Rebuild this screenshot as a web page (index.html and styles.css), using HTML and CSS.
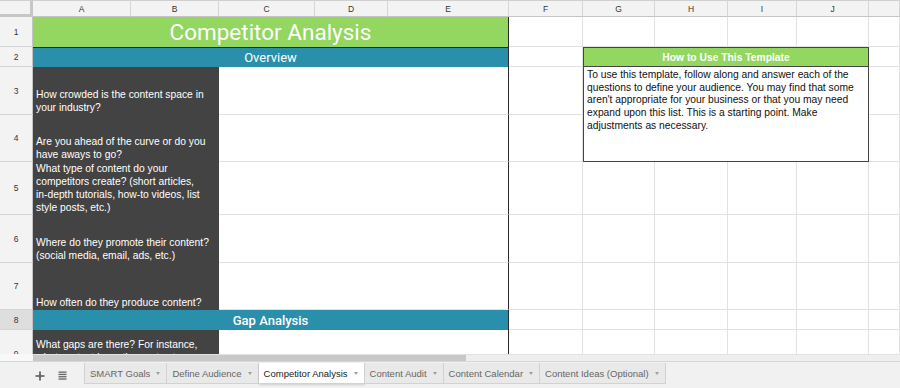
FILE: index.html
```html
<!DOCTYPE html>
<html>
<head>
<meta charset="utf-8">
<link rel="stylesheet" href="styles.css">
</head>
<body>
<div class="sheet">
  <div class="grid">
    <div class="corner"></div>
    <div class="ch">A</div><div class="ch">B</div><div class="ch">C</div><div class="ch">D</div><div class="ch">E</div>
    <div class="ch">F</div><div class="ch">G</div><div class="ch">H</div><div class="ch">I</div><div class="ch">J</div><div class="ch"></div>

    <div class="rh">1</div>
    <div class="title">Competitor Analysis</div>
    <div class="c"></div><div class="c"></div><div class="c"></div><div class="c"></div><div class="c"></div><div class="c"></div>

    <div class="rh">2</div>
    <div class="section">Overview</div>
    <div class="c"></div>
    <div class="howto-head">How to Use This Template</div>
    <div class="c"></div>

    <div class="rh">3</div>
    <div class="q">How crowded is the content space in your industry?</div>
    <div class="ans"></div>
    <div class="c"></div>
    <div class="howto-body">To use this template, follow along and answer each of the questions to define your audience. You may find that some aren't appropriate for your business or that you may need expand upon this list. This is a starting point. Make adjustments as necessary.</div>
    <div class="c"></div>

    <div class="rh">4</div>
    <div class="q">Are you ahead of the curve or do you have aways to go?</div>
    <div class="ans"></div>
    <div class="c"></div><div class="c"></div>

    <div class="rh">5</div>
    <div class="q nowrap"><p class="lines">What type of content do your<br>competitors create? (short articles,<br>in-depth tutorials, how-to videos, list<br>style posts, etc.)</p></div>
    <div class="ans"></div>
    <div class="c"></div><div class="c"></div><div class="c"></div><div class="c"></div><div class="c"></div><div class="c"></div>

    <div class="rh">6</div>
    <div class="q">Where do they promote their content? (social media, email, ads, etc.)</div>
    <div class="ans"></div>
    <div class="c"></div><div class="c"></div><div class="c"></div><div class="c"></div><div class="c"></div><div class="c"></div>

    <div class="rh">7</div>
    <div class="q">How often do they produce content?</div>
    <div class="ans"></div>
    <div class="c"></div><div class="c"></div><div class="c"></div><div class="c"></div><div class="c"></div><div class="c"></div>

    <div class="rh sel">8</div>
    <div class="section gap">Gap Analysis</div>
    <div class="c"></div><div class="c"></div><div class="c"></div><div class="c"></div><div class="c"></div><div class="c"></div>

    <div class="rh">9</div>
    <div class="q">What gaps are there? For instance, what content have they not yet covered?</div>
    <div class="ans"></div>
    <div class="c"></div><div class="c"></div><div class="c"></div><div class="c"></div><div class="c"></div><div class="c"></div>
  </div>
</div>

<div class="hscroll">
  <div class="hs-gap"></div>
  <div class="hs-track"><div class="hs-thumb"></div></div>
</div>

<div class="tabbar">
  <div class="tabtools">
    <svg class="ico" width="10" height="10" viewBox="0 0 10 10"><path d="M5 0.5V9.5M0.5 5H9.5" stroke="#555" stroke-width="1.6" fill="none"/></svg>
    <svg class="ico" width="9" height="9" viewBox="0 0 9 9"><rect x="0.5" y="0.5" width="8" height="1.3" fill="#666"/><rect x="0.5" y="2.8" width="8" height="1.3" fill="#666"/><rect x="0.5" y="5.1" width="8" height="1.3" fill="#666"/><rect x="0.5" y="7.4" width="8" height="1.3" fill="#666"/></svg>
  </div>
  <div class="tab">SMART Goals<span class="arr"></span></div>
  <div class="tab">Define Audience<span class="arr"></span></div>
  <div class="tab active">Competitor Analysis<span class="arr"></span></div>
  <div class="tab">Content Audit<span class="arr"></span></div>
  <div class="tab">Content Calendar<span class="arr"></span></div>
  <div class="tab">Content Ideas (Optional)<span class="arr"></span></div>
</div>
</body>
</html>
```

FILE: styles.css
```css
* { box-sizing: border-box; }

body {
  margin: 0;
  width: 900px;
  height: 388px;
  overflow: hidden;
  background: #fff;
  font-family: "Liberation Sans", Arial, sans-serif;
  display: flex;
  flex-direction: column;
}

.sheet {
  height: 354px;
  flex: none;
  overflow: hidden;
}

.grid {
  display: grid;
  grid-template-columns: 33px 98px 88px 96px 73px 121px 74px 72px 73px 69px 72px 31px;
  grid-template-rows: 17px 30px 20px 48px 47px 53px 48px 47px 20px 48px;
}

.corner {
  background: #f3f3f3;
  border-top: 1px solid #d0d0d0;
  border-right: 3px solid #c6c6c6;
  border-bottom: 3px solid #c6c6c6;
}

.ch {
  background: #f3f3f3;
  border-top: 1px solid #d0d0d0;
  border-right: 1px solid #d6d6d6;
  border-bottom: 1px solid #c4c4c4;
  color: #333;
  font-size: 8.5px;
  display: flex;
  align-items: center;
  justify-content: center;
}

.rh {
  background: #f3f3f3;
  border-right: 1px solid #c4c4c4;
  border-bottom: 1px solid #d6d6d6;
  color: #333;
  font-size: 8.5px;
  display: flex;
  align-items: center;
  justify-content: center;
}

.rh.sel {
  background: #dedede;
}

.c {
  border-right: 1px solid #e2e2e2;
  border-bottom: 1px solid #e2e2e2;
}

.title {
  grid-column: span 5;
  background: #93d660;
  border-right: 1px solid #2a2a2a;
  color: #fff;
  font-family: Roboto, "Liberation Sans", sans-serif;
  font-size: 22.5px;
  display: flex;
  align-items: center;
  justify-content: center;
}

.section {
  grid-column: span 5;
  background: #2a8fab;
  border-top: 1px solid #2a2a2a;
  border-right: 1px solid #2a2a2a;
  color: #fff;
  font-family: Roboto, "Liberation Sans", sans-serif;
  font-size: 13px;
  display: flex;
  align-items: center;
  justify-content: center;
}

.section.gap {
  border-top: none;
  font-weight: 500;
}

.q {
  grid-column: span 2;
  background: #434343;
  color: #fff;
  font-size: 10.3px;
  line-height: 12.9px;
  padding: 0 3px 0 3px;
  display: flex;
  align-items: flex-end;
}

.q.nowrap {
  white-space: nowrap;
}

.lines {
  margin: 0;
}

.ans {
  grid-column: span 3;
  border-right: 1px solid #2a2a2a;
  border-bottom: 1px solid #e2e2e2;
}

.howto-head {
  grid-column: span 4;
  background: #93d660;
  border: 1px solid #444;
  color: #fff;
  font-weight: bold;
  font-size: 10.3px;
  display: flex;
  align-items: center;
  justify-content: center;
}

.howto-body {
  grid-column: span 4;
  grid-row: span 2;
  border: 1px solid #444;
  border-top: none;
  color: #111;
  font-size: 10.3px;
  line-height: 12.7px;
  padding: 2px 3px;
}

.hscroll {
  height: 7px;
  flex: none;
  display: flex;
}

.hs-gap {
  width: 33px;
  background: #f8f8f8;
}

.hs-track {
  flex: 1;
  background: #eeeeee;
  border-top: 1px solid #e2e2e2;
}

.hs-thumb {
  width: 433px;
  height: 100%;
  background: #c8c8c8;
}

.tabbar {
  flex: 1;
  background: #f1f1f1;
  border-top: 1px solid #d6d6d6;
  display: flex;
  align-items: flex-start;
  padding-top: 1px;
}

.tabtools {
  width: 84px;
  height: 21px;
  display: flex;
  align-items: center;
  padding-left: 35px;
  gap: 13px;
  padding-top: 4px;
}

.ico {
  display: block;
}

.tab {
  height: 21px;
  background: #e9e9e9;
  border-right: 1px solid #d2d2d2;
  border-bottom: 1px solid #d2d2d2;
  color: #666;
  font-size: 9.5px;
  display: flex;
  align-items: center;
  padding: 0 6px 0 5px;
  white-space: nowrap;
}

.tab:nth-child(2) {
  border-left: 1px solid #d2d2d2;
}

.tab.active {
  background: #fff;
  color: #222;
  box-shadow: 0 1px 2px rgba(0,0,0,0.15);
}

.arr {
  margin-left: 6px;
  width: 0;
  height: 0;
  border-left: 2.5px solid transparent;
  border-right: 2.5px solid transparent;
  border-top: 3px solid #a0a0a0;
}
```
